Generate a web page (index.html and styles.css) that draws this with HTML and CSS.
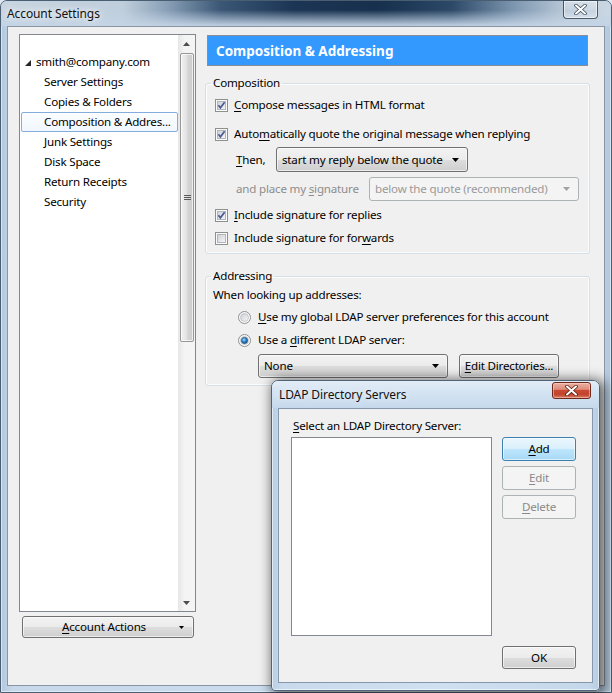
FILE: index.html
```html
<!DOCTYPE html>
<html lang="en">
<head>
<meta charset="utf-8">
<title>Account Settings</title>
<link rel="stylesheet" href="styles.css">
</head>
<body>
<svg class="defs" width="0" height="0" aria-hidden="true">
  <defs>
    <linearGradient id="cbOuter" x1="0" y1="0" x2="1" y2="1">
      <stop offset="0" stop-color="#f6f6f6"/>
      <stop offset="1" stop-color="#ffffff"/>
    </linearGradient>
    <linearGradient id="cbInner" x1="0" y1="0" x2="1" y2="1">
      <stop offset="0" stop-color="#cbd0d6"/>
      <stop offset="1" stop-color="#f7f7f7"/>
    </linearGradient>
    <radialGradient id="rdDot" cx="0.4" cy="0.35" r="0.7">
      <stop offset="0" stop-color="#a7e0fb"/>
      <stop offset="0.5" stop-color="#2f8ad2"/>
      <stop offset="1" stop-color="#134a85"/>
    </radialGradient>
  </defs>
</svg>

<div class="win">
  <div class="titlebar">
    <span class="title">Account Settings</span>
    <div class="cap-close glass">
      <svg width="13" height="11" viewBox="0 0 13 11"><path d="M2 1.5 L11 9.5 M11 1.5 L2 9.5" stroke="#3b4a5a" stroke-width="3.6" stroke-linecap="round"/><path d="M2 1.5 L11 9.5 M11 1.5 L2 9.5" stroke="#fff" stroke-width="2" stroke-linecap="round"/></svg>
    </div>
  </div>
  <div class="frame">
    <div class="client">
      <div class="sidebar">
        <div class="tree">
          <ul class="tree-list">
            <li class="acct"><svg class="twisty" width="6" height="6" viewBox="0 0 6 6"><path d="M6 0 L6 6 L0 6 Z" fill="#262626"/></svg>smith@company.com</li>
            <li>Server Settings</li>
            <li>Copies &amp; Folders</li>
            <li class="selected">Composition &amp; Addres...</li>
            <li>Junk Settings</li>
            <li>Disk Space</li>
            <li>Return Receipts</li>
            <li>Security</li>
          </ul>
          <div class="vscroll">
            <div class="sb-arrow"><svg width="7" height="4" viewBox="0 0 7 4"><path d="M0 4 L3.5 0 L7 4 Z" fill="#4d4d4d"/></svg></div>
            <div class="sb-track">
              <div class="sb-thumb">
                <svg width="7" height="7" viewBox="0 0 7 7"><path d="M0 1.5 H7 M0 3.5 H7 M0 5.5 H7" stroke="#5a5a5a" stroke-width="1"/></svg>
              </div>
            </div>
            <div class="sb-arrow"><svg width="7" height="4" viewBox="0 0 7 4"><path d="M0 0 L7 0 L3.5 4 Z" fill="#4d4d4d"/></svg></div>
          </div>
        </div>
        <div class="btn actions">
          <span class="actions-label"><u>A</u>ccount Actions</span>
          <svg class="drop-arrow small" width="5" height="3" viewBox="0 0 5 3"><path d="M0 0 H5 L2.5 3 Z" fill="#000"/></svg>
        </div>
      </div>

      <div class="pane">
        <div class="pane-header">Composition &amp; Addressing</div>

        <fieldset class="group comp">
          <legend>Composition</legend>
          <div class="row check r1">
            <svg class="cb" width="13" height="13" viewBox="0 0 13 13"><rect x="0.5" y="0.5" width="12" height="12" fill="url(#cbOuter)" stroke="#8e8f8f"/><rect x="2.5" y="2.5" width="8" height="8" fill="url(#cbInner)" stroke="#b1b6bc"/><path d="M3.4 6.3 L5.4 8.8 L9.6 3.2" fill="none" stroke="#4b5a96" stroke-width="1.7"/></svg>
            <span><u>C</u>ompose messages in HTML format</span>
          </div>
          <div class="row check r2">
            <svg class="cb" width="13" height="13" viewBox="0 0 13 13"><rect x="0.5" y="0.5" width="12" height="12" fill="url(#cbOuter)" stroke="#8e8f8f"/><rect x="2.5" y="2.5" width="8" height="8" fill="url(#cbInner)" stroke="#b1b6bc"/><path d="M3.4 6.3 L5.4 8.8 L9.6 3.2" fill="none" stroke="#4b5a96" stroke-width="1.7"/></svg>
            <span>Auto<u>m</u>atically quote the original message when replying</span>
          </div>
          <div class="row sub r3">
            <span class="sub-label then"><u>T</u>hen,</span>
            <div class="combo reply">
              <span>start my reply below the quote</span>
              <svg class="drop-arrow" width="7" height="4" viewBox="0 0 7 4"><path d="M0 0 H7 L3.5 4 Z" fill="#000"/></svg>
            </div>
          </div>
          <div class="row sub r4">
            <span class="sub-label sig disabled">and place my <u>s</u>ignature</span>
            <div class="combo disabled sigpos">
              <span>below the quote (recommended)</span>
              <svg class="drop-arrow" width="7" height="4" viewBox="0 0 7 4"><path d="M0 0 H7 L3.5 4 Z" fill="#a3a3a3"/></svg>
            </div>
          </div>
          <div class="row check r5">
            <svg class="cb" width="13" height="13" viewBox="0 0 13 13"><rect x="0.5" y="0.5" width="12" height="12" fill="url(#cbOuter)" stroke="#8e8f8f"/><rect x="2.5" y="2.5" width="8" height="8" fill="url(#cbInner)" stroke="#b1b6bc"/><path d="M3.4 6.3 L5.4 8.8 L9.6 3.2" fill="none" stroke="#4b5a96" stroke-width="1.7"/></svg>
            <span><u>I</u>nclude signature for replies</span>
          </div>
          <div class="row check r6">
            <svg class="cb" width="13" height="13" viewBox="0 0 13 13"><rect x="0.5" y="0.5" width="12" height="12" fill="url(#cbOuter)" stroke="#8e8f8f"/><rect x="2.5" y="2.5" width="8" height="8" fill="url(#cbInner)" stroke="#b1b6bc"/></svg>
            <span>Include signature for for<u>w</u>ards</span>
          </div>
        </fieldset>

        <fieldset class="group addr">
          <legend>Addressing</legend>
          <div class="row a1">When looking up addresses:</div>
          <div class="row radio a2">
            <svg class="rd" width="13" height="13" viewBox="0 0 13 13"><circle cx="6.5" cy="6.5" r="6" fill="url(#cbOuter)" stroke="#8e8f8f"/><circle cx="6.5" cy="6.5" r="4" fill="url(#cbInner)" stroke="#b8bdc3" stroke-width="0.8"/></svg>
            <span><u>U</u>se my global LDAP server preferences for this account</span>
          </div>
          <div class="row radio a3">
            <svg class="rd" width="13" height="13" viewBox="0 0 13 13"><circle cx="6.5" cy="6.5" r="6" fill="url(#cbOuter)" stroke="#8e8f8f"/><circle cx="6.5" cy="6.5" r="4" fill="#d9dde2" stroke="#b8bdc3" stroke-width="0.8"/><circle cx="6.5" cy="6.5" r="3" fill="url(#rdDot)" stroke="#1f4f80" stroke-width="0.8"/></svg>
            <span>Use a <u>d</u>ifferent LDAP server:</span>
          </div>
          <div class="row a4">
            <div class="combo ldap">
              <span>None</span>
              <svg class="drop-arrow" width="7" height="4" viewBox="0 0 7 4"><path d="M0 0 H7 L3.5 4 Z" fill="#000"/></svg>
            </div>
            <div class="btn editdirs"><u>E</u>dit Directories...</div>
          </div>
        </fieldset>
      </div>
    </div>
  </div>
</div>

<div class="dialog">
  <div class="dlg-titlebar">
    <span class="dlg-title">LDAP Directory Servers</span>
    <div class="cap-close red">
      <svg width="13" height="11" viewBox="0 0 13 11"><path d="M2 1.5 L11 9.5 M11 1.5 L2 9.5" stroke="#5a1c12" stroke-width="3.6" stroke-linecap="round"/><path d="M2 1.5 L11 9.5 M11 1.5 L2 9.5" stroke="#fff" stroke-width="2" stroke-linecap="round"/></svg>
    </div>
  </div>
  <div class="dlg-frame">
    <div class="dlg-client">
      <div class="dlg-label"><u>S</u>elect an LDAP Directory Server:</div>
      <div class="dlg-main">
        <div class="listbox"></div>
        <div class="dlg-buttons">
          <div class="btn default"><u>A</u>dd</div>
          <div class="btn disabled"><u>E</u>dit</div>
          <div class="btn disabled"><u>D</u>elete</div>
        </div>
      </div>
      <div class="dlg-footer">
        <div class="btn ok">OK</div>
      </div>
    </div>
  </div>
</div>
</body>
</html>
```
FILE: styles.css
```css
* { box-sizing: border-box; }

html, body { margin: 0; padding: 0; }

body {
  width: 612px;
  height: 693px;
  overflow: hidden;
  position: relative;
  background: #dfe8f1;
  font-family: "Noto Sans", "Open Sans", sans-serif;
  font-size: 11.6px;
  letter-spacing: -0.2px;
  line-height: 16px;
  color: #000;
}

u { text-decoration: underline; text-underline-offset: 2px; text-decoration-thickness: 1px; }

.defs { position: absolute; width: 0; height: 0; }

/* ---------- main window frame ---------- */
.win {
  width: 612px;
  height: 693px;
  display: flex;
  flex-direction: column;
  border: 1px solid #4a5e72;
  border-radius: 7px 7px 0 0;
  background: linear-gradient(90deg, #b4c9de 0, #c6d8ea 2%, #cadcee 50%, #c3d6e9 97%, #b2c8dd 100%);
  box-shadow: inset 0 0 0 1px rgba(255, 255, 255, 0.5);
}

.titlebar {
  height: 25px;
  flex: none;
  display: flex;
  align-items: center;
  padding-left: 6px;
  border-radius: 6px 6px 0 0;
  background:
    linear-gradient(180deg, rgba(200, 216, 232, 0) 0, rgba(200, 216, 232, 0) 9px, rgba(196, 212, 229, 0.92) 24px),
    linear-gradient(90deg, #c8d5e1 0, #bfcedc 20%, #8aa1b8 27%, #3b5776 36%, #1c3554 48%, #16304d 62%, #2c4968 74%, #7d96af 84%, #bccbda 93%, #cad7e3 100%);
}

.title {
  color: #111;
  font-size: 12px;
  letter-spacing: -0.1px;
  text-shadow: 0 0 6px #fff, 0 0 10px rgba(255, 255, 255, 0.9);
}

.cap-close {
  margin-left: auto;
  align-self: flex-start;
  display: flex;
  align-items: center;
  justify-content: center;
}

.cap-close.glass {
  width: 35px;
  height: 19px;
  margin-right: 13px;
  margin-top: -1px;
  border: 1px solid rgba(30, 45, 60, 0.75);
  border-radius: 0 0 4px 4px;
  background: linear-gradient(180deg, rgba(255, 255, 255, 0.35) 0, rgba(255, 255, 255, 0.15) 50%, rgba(255, 255, 255, 0.05) 55%, rgba(255, 255, 255, 0.3) 100%);
  box-shadow: inset 0 0 0 1px rgba(255, 255, 255, 0.55);
}

.frame {
  flex: 1;
  display: flex;
  padding: 0 6px 6px 6px;
}

.client {
  flex: 1;
  display: flex;
  border: 1px solid #8795a5;
  background: #f0f0f0;
  padding: 7px 0 0 11px;
}

/* ---------- sidebar tree ---------- */
.sidebar {
  width: 177px;
  display: flex;
  flex-direction: column;
}

.tree {
  height: 578px;
  display: flex;
  border: 1px solid #828790;
  background: #fff;
}

.tree-list {
  flex: 1;
  list-style: none;
  margin: 0;
  padding: 17px 0 0 1px;
}

.tree-list li {
  height: 20px;
  display: flex;
  align-items: center;
  padding-left: 23px;
  white-space: nowrap;
}

.tree-list li.acct { padding-left: 4px; }

.twisty { margin-right: 5px; margin-top: 1px; }

.tree-list li.selected {
  padding-left: 22px;
  border: 1px solid #84acdd;
  border-radius: 2px;
  background: linear-gradient(180deg, #fbfdff 0, #f1f7fe 100%);
}

.vscroll {
  width: 17px;
  display: flex;
  flex-direction: column;
  background: linear-gradient(90deg, #e6e6e6 0, #f4f4f4 40%, #f4f4f4 100%);
}

.sb-arrow {
  height: 17px;
  display: flex;
  align-items: center;
  justify-content: center;
}

.sb-track {
  flex: 1;
  padding: 1px 0 0 2px;
}

.sb-thumb {
  height: 289px;
  width: 14px;
  border: 1px solid #979797;
  border-radius: 2px;
  background: linear-gradient(90deg, #f1f1f1 0, #e3e3e3 45%, #d6d6d6 55%, #cbcbcb 100%);
  box-shadow: inset 0 0 0 1px rgba(255, 255, 255, 0.7);
  display: flex;
  align-items: center;
  justify-content: center;
}

/* ---------- buttons & combos ---------- */
.btn, .combo {
  border: 1px solid #707070;
  border-radius: 3px;
  background: linear-gradient(180deg, #f2f2f2 0, #ebebeb 50%, #dddddd 51%, #cfcfcf 100%);
  box-shadow: inset 0 0 0 1px rgba(255, 255, 255, 0.6);
  display: flex;
  align-items: center;
  white-space: nowrap;
}

.btn { justify-content: center; }

.combo { padding-left: 5px; }

.combo .drop-arrow { margin-left: auto; margin-right: 8px; flex: none; }

.combo.disabled {
  border-color: #adb2b5;
  background: #f4f4f4;
  box-shadow: none;
  color: #9a9a9a;
}

.btn.disabled {
  border-color: #adb2b5;
  background: #f4f4f4;
  box-shadow: none;
  color: #8a8a8a;
}

.btn.default {
  border-color: #3c7fb1;
  background: linear-gradient(180deg, #eaf6fd 0, #d9f0fc 50%, #bee6fd 51%, #a7d9f5 100%);
  box-shadow: inset 0 0 0 1px rgba(255, 255, 255, 0.55);
}

.actions {
  margin: 4px 0 0 3px;
  width: 172px;
  height: 22px;
  padding-right: 9px;
}

.actions-label { flex: 1; text-align: center; padding-left: 6px; }

/* ---------- right pane ---------- */
.pane {
  width: 385px;
  margin-left: 9px;
  display: flex;
  flex-direction: column;
}

.pane-header {
  margin: 1px 2px 0;
  height: 31px;
  border: 1px solid #8a8d95;
  background: #3399ff;
  color: #fff;
  font-weight: bold;
  font-size: 13.5px;
  letter-spacing: 0;
  display: flex;
  align-items: center;
  padding-left: 8px;
}

.group {
  margin: 0;
  padding: 0 0 5px;
  min-width: 0;
  border: 1px solid #d5dfe5;
  border-radius: 3px;
  box-shadow: inset 0 0 0 1px #fbfcfd;
}

.group legend {
  padding: 0 2px;
  margin-left: 5px;
  line-height: 14px;
}

.comp { margin-top: 10px; }
.addr { margin-top: 15px; padding-bottom: 7px; }

.row {
  display: flex;
  align-items: center;
  height: 20px;
  white-space: nowrap;
}

.row.check { padding-left: 9px; }
.row.check .cb { margin-right: 6px; flex: none; }

.r1 { margin-top: 5px; }
.r2 { margin-top: 9px; }
.r3 { margin-top: 3px; height: 25px; }
.r4 { margin-top: 5px; height: 24px; }
.r5 { margin-top: 4px; }
.r6 { margin-top: 3px; }

.row.sub { padding-left: 30px; }
.sub-label.then { width: 40px; }
.sub-label.sig { width: 133px; }
.sub-label.disabled { color: #8d8d8d; }

.combo.reply { width: 192px; height: 25px; }
.combo.sigpos { width: 210px; height: 24px; }

.a1 { margin-top: 2px; padding-left: 7px; }
.row.radio { padding-left: 32px; }
.row.radio .rd { margin-right: 7px; flex: none; }
.a2 { margin-top: 2px; }
.a3 { margin-top: 3px; }
.a4 { margin-top: 4px; height: 24px; padding-left: 52px; }

.combo.ldap { width: 190px; height: 24px; }
.btn.editdirs { width: 100px; height: 24px; margin-left: 11px; }

/* ---------- LDAP dialog ---------- */
.dialog {
  position: absolute;
  left: 271px;
  top: 380px;
  width: 329px;
  height: 311px;
  display: flex;
  flex-direction: column;
  border: 1px solid #506378;
  border-radius: 7px 7px 4px 4px;
  background: linear-gradient(90deg, #b9cfe5 0, #c8daec 3%, #cfe0f0 50%, #c5d8eb 97%, #b6cce2 100%);
  box-shadow: inset 0 0 0 1px rgba(255, 255, 255, 0.6), 3px 2px 12px 3px rgba(0, 0, 0, 0.55);
}

.dlg-titlebar {
  height: 27px;
  flex: none;
  display: flex;
  align-items: center;
  padding-left: 7px;
  border-radius: 6px 6px 0 0;
  background: linear-gradient(180deg, #e3edf7 0, #d3e3f2 45%, #c6d9ec 100%);
}

.dlg-title { color: #111; font-size: 12px; letter-spacing: -0.1px; text-shadow: 0 0 6px #fff; }

.cap-close.red {
  width: 39px;
  height: 17px;
  margin-right: 8px;
  margin-top: 1px;
  border: 1px solid #6e271c;
  border-radius: 3px;
  background: linear-gradient(180deg, #eab1a4 0, #df8c79 42%, #c94a33 50%, #c2432c 75%, #d87a62 100%);
  box-shadow: inset 0 0 0 1px rgba(255, 220, 210, 0.5);
}

.dlg-frame {
  flex: 1;
  display: flex;
  padding: 0 6px 7px 6px;
}

.dlg-client {
  flex: 1;
  border: 1px solid #8597ab;
  background: #f0f0f0;
  padding: 7px 16px 0 12px;
  display: flex;
  flex-direction: column;
}

.dlg-label { height: 20px; display: flex; align-items: center; padding-left: 2px; }

.dlg-main { display: flex; margin-top: 1px; }

.listbox {
  width: 201px;
  height: 199px;
  border: 1px solid #828790;
  background: #fff;
}

.dlg-buttons {
  margin-left: 10px;
  display: flex;
  flex-direction: column;
  gap: 5px;
}

.dlg-buttons .btn { width: 74px; height: 24px; }

.dlg-footer { display: flex; justify-content: flex-end; margin-top: 10px; }

.btn.ok { width: 74px; height: 23px; }
```
